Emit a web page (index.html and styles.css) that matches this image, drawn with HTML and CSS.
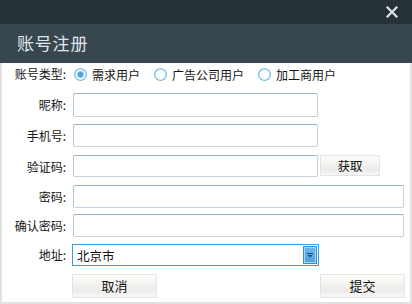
FILE: index.html
```html
<!DOCTYPE html>
<html lang="zh">
<head>
<meta charset="utf-8">
<link rel="stylesheet" href="styles.css">
</head>
<body>
<div class="window">
  <div class="topbar">
    <svg class="close" width="12" height="12" viewBox="0 0 12 12"><path d="M1.5 1.5 L10.5 10.5 M10.5 1.5 L1.5 10.5" stroke="#dde1e3" stroke-width="2.2" stroke-linecap="square"/></svg>
  </div>
  <div class="titlebar"><span class="title">账号注册</span></div>
  <div class="body">
    <div class="form">
      <div class="label row1">账号类型:</div>
      <div class="radios row1">
        <label class="radio"><svg width="13" height="13" viewBox="0 0 13 13"><circle cx="6.5" cy="6.5" r="5.8" fill="#fff" stroke="#5eaee8" stroke-width="1.1"/><circle cx="6.5" cy="6.5" r="3.4" fill="#4fa6e5" stroke="#b5daf4" stroke-width="1"/></svg><span>需求用户</span></label>
        <label class="radio"><svg width="13" height="13" viewBox="0 0 13 13"><circle cx="6.5" cy="6.5" r="5.8" fill="#fff" stroke="#5eaee8" stroke-width="1.1"/></svg><span>广告公司用户</span></label>
        <label class="radio"><svg width="13" height="13" viewBox="0 0 13 13"><circle cx="6.5" cy="6.5" r="5.8" fill="#fff" stroke="#5eaee8" stroke-width="1.1"/></svg><span>加工商用户</span></label>
      </div>

      <div class="label">昵称:</div>
      <div class="ctrl"><div class="input short h24"></div></div>

      <div class="label">手机号:</div>
      <div class="ctrl"><div class="input short"></div></div>

      <div class="label">验证码:</div>
      <div class="ctrl code"><div class="input short h22"></div><button class="btn small">获取</button></div>

      <div class="label">密码:</div>
      <div class="ctrl"><div class="input long"></div></div>

      <div class="label">确认密码:</div>
      <div class="ctrl"><div class="input long"></div></div>

      <div class="label h22">地址:</div>
      <div class="ctrl">
        <div class="select"><span>北京市</span>
          <span class="drop"><svg width="6" height="5" viewBox="0 0 6 5"><rect x="0" y="0" width="6" height="1" fill="#1e4a6e"/><path d="M0.5 2 L5.5 2 L3 4.5 Z" fill="#1e4a6e"/></svg></span>
        </div>
      </div>

      <div class="label"></div>
      <div class="ctrl actions"><button class="btn big">取消</button><button class="btn big">提交</button></div>
    </div>
  </div>
</div>
</body>
</html>
```

FILE: styles.css
```css
* { box-sizing: border-box; }
html, body { margin: 0; padding: 0; background: #fff; }
body { font-family: "Noto Sans CJK SC", "Noto Sans", sans-serif; font-size: 12px; color: #111; }

.window { width: 412px; height: 304px; display: flex; flex-direction: column; overflow: hidden; }

.topbar { height: 24px; background: #273238; display: flex; justify-content: flex-end; align-items: center; padding-right: 14px; }
.close { display: block; }

.titlebar { height: 39px; background: #37474f; display: flex; align-items: center; padding-left: 17px; }
.title { color: #e2e6e8; font-size: 17px; letter-spacing: 0.8px; line-height: 20px; padding-bottom: 1px; }

.body { flex: 1; border: 2px solid #e1e1e1; border-top: 0; }

.form {
  display: grid;
  grid-template-columns: 64px 1fr;
  grid-template-rows: 30px 31px 31px 30px 29px 30px 30px 28px;
  column-gap: 7px;
}

.label { text-align: right; height: 23px; line-height: 23px; white-space: nowrap; color: #141414; }
.label.row1 { height: 22px; line-height: 22px; }
.label.h22 { height: 22px; line-height: 22px; }

.radios { display: flex; align-items: center; height: 22px; gap: 14px; margin-left: 1px; }
.radio { display: flex; align-items: center; gap: 5px; font-size: 12px; color: #151515; }
.radio svg { display: block; }

.ctrl { display: flex; align-items: flex-start; }
.input {
  height: 23px; background: #fff;
  border: 1px solid #c3d2dd; border-top-color: #97b0c4; border-left-color: #aec2d1;
  border-radius: 2px;
}
.input.h24 { height: 24px; }
.input.h22 { height: 22px; }
.input.short { width: 245px; }
.input.long { width: 331px; }

.code { gap: 2px; }

.btn {
  font-family: inherit; font-size: 12.5px; color: #111; padding: 0;
  border: 1px solid #e4e4e4; border-radius: 0;
  background: linear-gradient(#fffdf9 0%, #f7f5f2 35%, #ecebea 70%, #f8f8f8 100%);
}
.btn.small { width: 60px; height: 21px; line-height: 19px; }
.btn.big { width: 85px; height: 24px; line-height: 22px; font-size: 13px; }

.actions { justify-content: space-between; width: 333px; margin-left: -1px; }

.select {
  margin-left: -1px;
  width: 247px; height: 22px;
  border: 1px solid #3a9de0;
  display: flex; align-items: center; justify-content: space-between;
  padding-left: 4px; padding-right: 1px;
  font-size: 12.5px; color: #111;
}
.drop {
  width: 14px; height: 18px;
  border: 1px solid #2e90d6;
  box-shadow: inset 0 0 0 1px #a9d6f5;
  background: linear-gradient(#6bb8ee, #4aa4e3);
  display: flex; align-items: center; justify-content: center;
}
.drop svg { display: block; }
```
